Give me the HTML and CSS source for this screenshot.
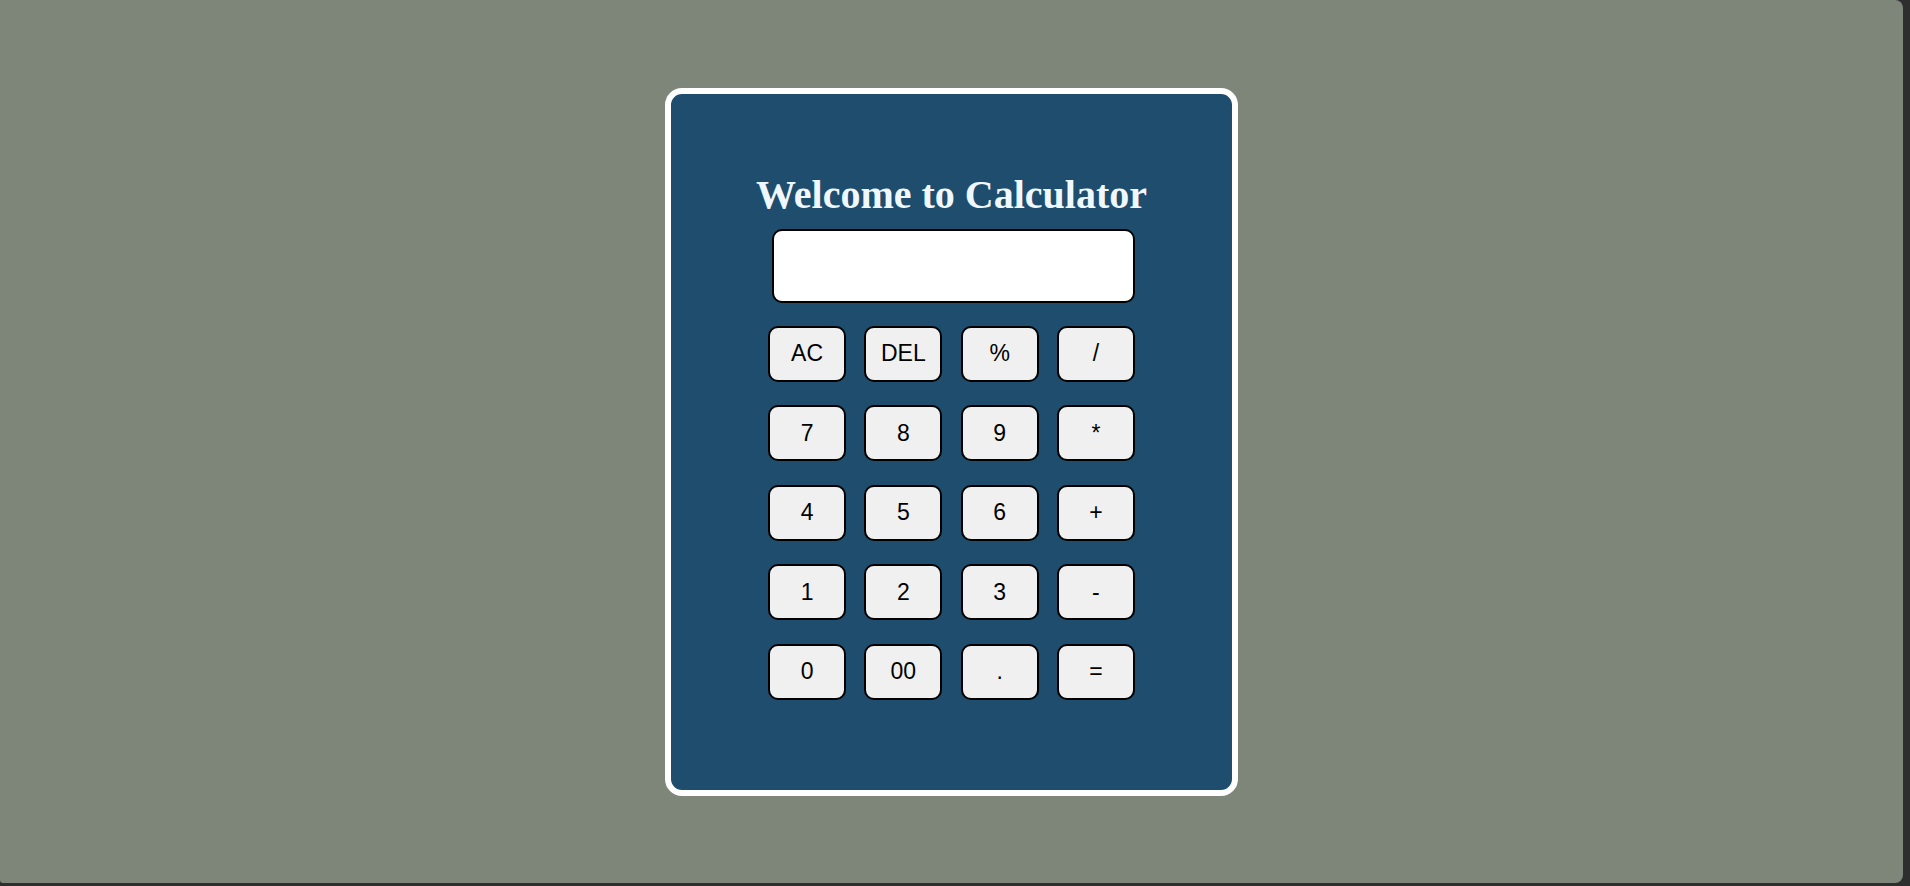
FILE: index.html
```html
<!DOCTYPE html>
<html lang="en">
<head>
<meta charset="utf-8">
<title>Calculator</title>
<link rel="stylesheet" href="styles.css">
</head>
<body>
<div class="page">
  <div class="card">
    <h1 class="title">Welcome to Calculator</h1>
    <input class="display" type="text" readonly>
    <div class="keys">
      <button class="key">AC</button>
      <button class="key">DEL</button>
      <button class="key">%</button>
      <button class="key">/</button>
      <button class="key">7</button>
      <button class="key">8</button>
      <button class="key">9</button>
      <button class="key">*</button>
      <button class="key">4</button>
      <button class="key">5</button>
      <button class="key">6</button>
      <button class="key">+</button>
      <button class="key">1</button>
      <button class="key">2</button>
      <button class="key">3</button>
      <button class="key">-</button>
      <button class="key">0</button>
      <button class="key">00</button>
      <button class="key">.</button>
      <button class="key">=</button>
    </div>
  </div>
</div>
</body>
</html>
```
FILE: styles.css
```css
html {
  background: #2e2e2e;
}
body {
  margin: 0;
  width: 1910px;
  height: 886px;
  overflow: hidden;
}
.page {
  width: 1903px;
  height: 883px;
  background: #7d8679;
  border-radius: 0 8px 8px 3px;
  display: flex;
  align-items: center;
  justify-content: center;
}
.card {
  box-sizing: border-box;
  width: 573px;
  height: 708px;
  border: 6px solid #ffffff;
  border-radius: 17px;
  background: #1e4d6d;
  display: flex;
  flex-direction: column;
  align-items: center;
  padding-top: 78px;
}
.title {
  margin: 0;
  font-family: "Liberation Serif", "Times New Roman", serif;
  font-weight: 700;
  font-size: 40px;
  line-height: 46px;
  color: #f0f8ff;
}
.display {
  box-sizing: border-box;
  margin: 11px 0 0 4px;
  width: 363px;
  height: 74px;
  border: 2px solid #000;
  border-radius: 10px;
  background: #fff;
  padding: 0 10px;
  outline: none;
}
.keys {
  margin-top: 23px;
  display: grid;
  grid-template-columns: repeat(4, 78px);
  grid-auto-rows: 56px;
  column-gap: 18.3px;
  row-gap: 23.6px;
}
.key {
  box-sizing: border-box;
  border: 2px solid #000;
  border-radius: 10px;
  background: #f0f0f0;
  color: #000;
  font-family: "Liberation Sans", Arial, sans-serif;
  font-size: 23px;
  padding: 0;
  cursor: pointer;
}
```
